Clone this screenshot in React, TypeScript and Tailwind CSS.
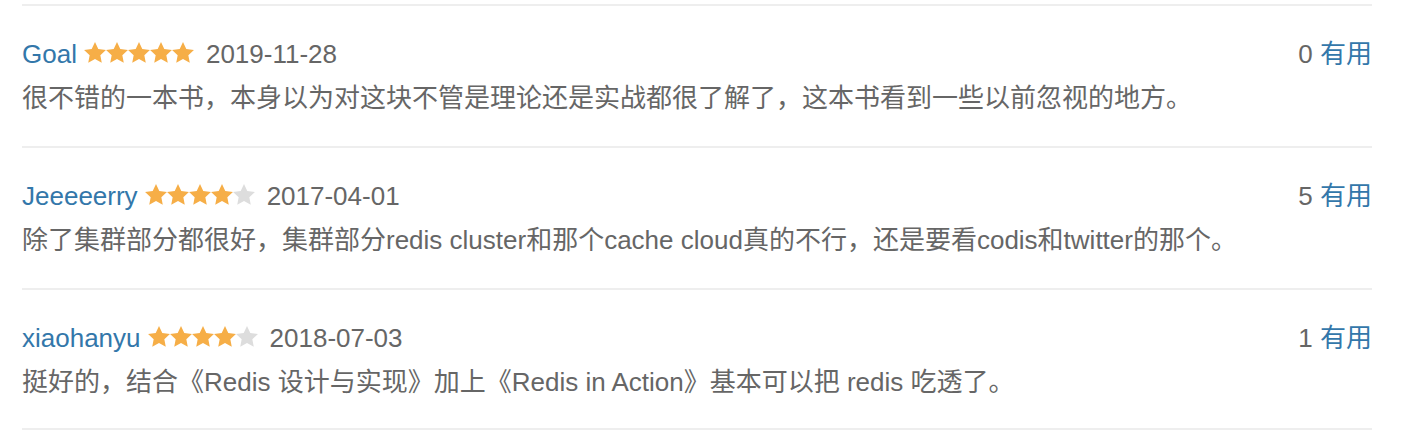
import React from "react";

const reviews = [
  { name: "Goal", stars: 5, date: "2019-11-28", useful: 0, text: "很不错的一本书，本身以为对这块不管是理论还是实战都很了解了，这本书看到一些以前忽视的地方。" },
  { name: "Jeeeeerry", stars: 4, date: "2017-04-01", useful: 5, text: "除了集群部分都很好，集群部分redis cluster和那个cache cloud真的不行，还是要看codis和twitter的那个。" },
  { name: "xiaohanyu", stars: 4, date: "2018-07-03", useful: 1, text: "挺好的，结合《Redis 设计与实现》加上《Redis in Action》基本可以把 redis 吃透了。" },
];

function Star({ on }: { on: boolean }) {
  return (
    <svg width="22" height="21" viewBox="0 0 22 21" className="block">
      <path
        d="M11 0 L14.29 6.97 L21.94 7.95 L16.33 13.23 L17.76 20.8 L11 17.1 L4.24 20.8 L5.67 13.23 L0.06 7.95 L7.71 6.97 Z"
        fill={on ? "#f6ae47" : "#dddddd"}
      />
    </svg>
  );
}

export default function App() {
  return (
    <div
      className="w-[1414px] h-[436px] bg-white pt-[4px]"
      style={{ fontFamily: '"Liberation Sans", Arial, "Noto Sans CJK SC", sans-serif' }}
    >
      <div className="mx-[22px] w-[1350px]">
        {reviews.map((r, i) => (
          <div key={i} className="border-t-2 border-[#eeeeee] pt-[28px] pb-[28px] last:border-b-2 last:pb-[26px]">
            <div className="flex items-center justify-between h-[40px] text-[26px] leading-[40px]">
              <div className="flex items-center">
                <span className="text-[#3377aa]">{r.name}</span>
                <span className="flex items-center ml-[7px] mr-[12px] -mt-[3px]">
                  {[0, 1, 2, 3, 4].map((k) => (
                    <Star key={k} on={k < r.stars} />
                  ))}
                </span>
                <span className="text-[#666666]">{r.date}</span>
              </div>
              <div>
                <span className="text-[#666666]">{r.useful}</span>
                <span className="text-[#3377aa]"> 有用</span>
              </div>
            </div>
            <div className="mt-[4px] h-[40px] text-[26px] leading-[40px] text-[#666666] whitespace-nowrap">
              {r.text}
            </div>
          </div>
        ))}
      </div>
    </div>
  );
}
